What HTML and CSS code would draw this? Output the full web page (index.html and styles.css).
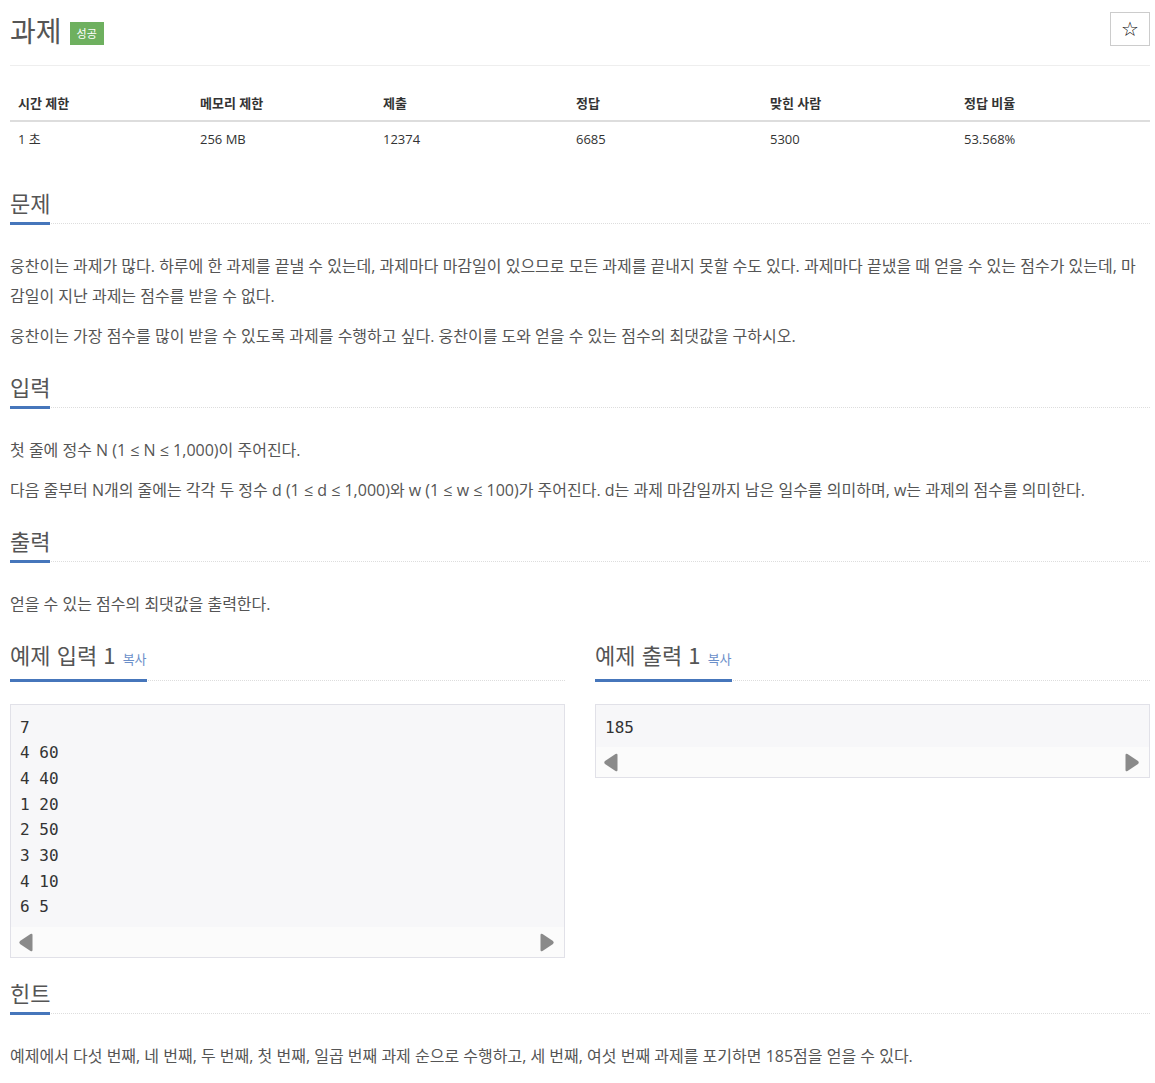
FILE: index.html
```html
<!DOCTYPE html>
<html lang="ko">
<head>
<meta charset="utf-8">
<title>과제</title>
<link rel="stylesheet" href="styles.css">
</head>
<body>
<div class="page">
  <div class="page-header">
    <h1 class="title">과제 <span class="badge">성공</span></h1>
    <button class="star-btn" type="button">☆</button>
  </div>

  <table class="info">
    <colgroup>
      <col class="c1"><col class="c2"><col class="c3"><col class="c4"><col class="c5"><col class="c6">
    </colgroup>
    <thead>
      <tr><th>시간 제한</th><th>메모리 제한</th><th>제출</th><th>정답</th><th>맞힌 사람</th><th>정답 비율</th></tr>
    </thead>
    <tbody>
      <tr><td>1 초</td><td>256 MB</td><td>12374</td><td>6685</td><td>5300</td><td>53.568%</td></tr>
    </tbody>
  </table>

  <section class="section first">
    <div class="headline"><h2>문제</h2></div>
    <p>웅찬이는 과제가 많다. 하루에 한 과제를 끝낼 수 있는데, 과제마다 마감일이 있으므로 모든 과제를 끝내지 못할 수도 있다. 과제마다 끝냈을 때 얻을 수 있는 점수가 있는데, 마감일이 지난 과제는 점수를 받을 수 없다.</p>
    <p>웅찬이는 가장 점수를 많이 받을 수 있도록 과제를 수행하고 싶다. 웅찬이를 도와 얻을 수 있는 점수의 최댓값을 구하시오.</p>
  </section>

  <section class="section">
    <div class="headline"><h2>입력</h2></div>
    <p>첫 줄에 정수 N (1 ≤ N ≤ 1,000)이 주어진다.</p>
    <p>다음 줄부터 N개의 줄에는 각각 두 정수 d (1 ≤ d ≤ 1,000)와 w (1 ≤ w ≤ 100)가 주어진다. d는 과제 마감일까지 남은 일수를 의미하며, w는 과제의 점수를 의미한다.</p>
  </section>

  <section class="section">
    <div class="headline"><h2>출력</h2></div>
    <p>얻을 수 있는 점수의 최댓값을 출력한다.</p>
  </section>

  <section class="section samples">
    <div class="sample">
      <div class="headline"><h2>예제 입력 1 <a class="copy">복사</a></h2></div>
      <div class="sample-box">
        <pre>7
4 60
4 40
1 20
2 50
3 30
4 10
6 5</pre>
        <div class="hscroll">
          <svg class="arrow" width="15" height="19" viewBox="0 0 15 19"><path d="M12.5 1 L2 8 Q0.5 9.5 2 11 L12.5 18 Q14.5 19 14.5 17 L14.5 2 Q14.5 0 12.5 1 Z" fill="#8a8a8a"/></svg>
          <svg class="arrow" width="15" height="19" viewBox="0 0 15 19"><path d="M2.5 1 L13 8 Q14.5 9.5 13 11 L2.5 18 Q0.5 19 0.5 17 L0.5 2 Q0.5 0 2.5 1 Z" fill="#8a8a8a"/></svg>
        </div>
      </div>
    </div>
    <div class="sample">
      <div class="headline"><h2>예제 출력 1 <a class="copy">복사</a></h2></div>
      <div class="sample-box">
        <pre>185</pre>
        <div class="hscroll">
          <svg class="arrow" width="15" height="19" viewBox="0 0 15 19"><path d="M12.5 1 L2 8 Q0.5 9.5 2 11 L12.5 18 Q14.5 19 14.5 17 L14.5 2 Q14.5 0 12.5 1 Z" fill="#8a8a8a"/></svg>
          <svg class="arrow" width="15" height="19" viewBox="0 0 15 19"><path d="M2.5 1 L13 8 Q14.5 9.5 13 11 L2.5 18 Q0.5 19 0.5 17 L0.5 2 Q0.5 0 2.5 1 Z" fill="#8a8a8a"/></svg>
        </div>
      </div>
    </div>
  </section>

  <section class="section hint">
    <div class="headline"><h2>힌트</h2></div>
    <p>예제에서 다섯 번째, 네 번째, 두 번째, 첫 번째, 일곱 번째 과제 순으로 수행하고, 세 번째, 여섯 번째 과제를 포기하면 185점을 얻을 수 있다.</p>
  </section>
</div>
</body>
</html>
```

FILE: styles.css
```css
html, body {
  margin: 0;
  padding: 0;
  background: #fff;
}
body {
  font-family: "Open Sans", "Noto Sans CJK KR", sans-serif;
  color: #333;
}
.page {
  width: 1140px;
  margin-left: 10px;
}
.page-header {
  display: flex;
  justify-content: space-between;
  align-items: flex-start;
  border-bottom: 1px solid #eee;
  height: 66px;
  box-sizing: border-box;
}
.title {
  margin: 10px 0 0;
  font-size: 28px;
  font-weight: 400;
  line-height: 40px;
  color: #555;
  font-family: "Noto Sans CJK KR", sans-serif;
  display: flex;
  align-items: center;
  gap: 8px;
}
.badge {
  display: inline-block;
  background: #6eb05f;
  color: #fff;
  font-size: 11px;
  line-height: 23px;
  height: 23px;
  padding: 0 7px;
  font-weight: 400;
  margin-top: 6px;
}
.star-btn {
  margin-top: 12px;
  width: 40px;
  height: 34px;
  border: 1px solid #ccc;
  background: #fff;
  font-size: 20px;
  line-height: 1;
  color: #111;
  padding: 0;
  font-family: "DejaVu Sans", sans-serif;
}
.info {
  width: 1140px;
  border-collapse: collapse;
  margin-top: 20px;
  font-size: 13px;
  table-layout: fixed;
}
.c1 { width: 182px; }
.c2 { width: 183px; }
.c3 { width: 193px; }
.c4 { width: 194px; }
.c5 { width: 194px; }
.c6 { width: 194px; }
.info th, .info td {
  text-align: left;
  padding: 8px;
  line-height: 18px;
}
.info th {
  font-weight: 700;
  border-bottom: 2px solid #ddd;
}
.section {
  margin-top: 23px;
}
.section.first {
  margin-top: 34px;
}
.section.hint {
  margin-top: 22px;
}
.headline {
  border-bottom: 1px dotted #ddd;
  margin-bottom: 27px;
  display: flex;
}
.headline h2 {
  margin: 0 0 -2px;
  font-size: 22px;
  font-weight: 400;
  line-height: 24px;
  color: #555;
  padding-bottom: 8px;
  border-bottom: 3px solid #4676bb;
  font-family: "Noto Sans CJK KR", sans-serif;
}
.copy {
  font-size: 13px;
  color: #6b8fc9;
  margin-left: 1px;
}
p {
  margin: 0 0 10px;
  font-size: 16px;
  line-height: 30px;
  color: #555;
}
.section p:last-child {
  margin-bottom: 0;
}
.samples {
  display: grid;
  grid-template-columns: 555px 555px;
  column-gap: 30px;
  align-items: start;
}
.sample .headline {
  margin-bottom: 23px;
}
.sample-box {
  border: 1px solid #e1e1e8;
  background: #fafafa;
}
.sample-box pre {
  margin: 0;
  background: #f7f7f9;
  padding: 9.5px 9.5px 7px 9px;
  font-family: "DejaVu Sans Mono", monospace;
  font-size: 16px;
  line-height: 25.7px;
  color: #333;
}
.hscroll {
  height: 30px;
  display: flex;
  justify-content: space-between;
  align-items: center;
  padding: 0 9px 0 7px;
  background: #fbfbfb;
}
.arrow {
  display: block;
}
```
